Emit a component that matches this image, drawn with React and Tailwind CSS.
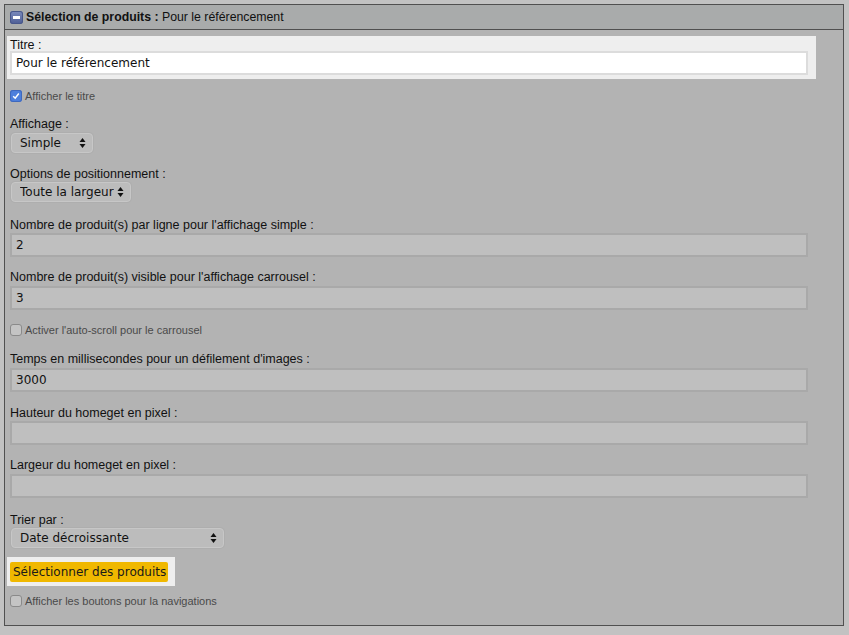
import React, { useState } from "react";

const label = "block h-[14px] text-[12.5px] leading-[16px] text-[#111]";
const textInput =
  "block w-[798px] h-[24px] border-2 border-[#a9a9a9] bg-[#bfbfbf] px-[4px] text-[12px] text-[#111] outline-none";
const inputFont = { fontFamily: '"DejaVu Sans", Verdana, sans-serif' };

function Arrows() {
  return (
    <svg width="7" height="11" viewBox="0 0 7 11" className="pointer-events-none absolute right-[7px] top-1/2 -translate-y-1/2">
      <path d="M3.5 0.5 L6.5 4.5 L0.5 4.5 Z" fill="#111" />
      <path d="M3.5 10.5 L6.5 6.5 L0.5 6.5 Z" fill="#111" />
    </svg>
  );
}

function Select({ value, options, width, className = "" }) {
  return (
    <div className={`relative ${width} ${className}`}>
      <select
        defaultValue={value}
        style={inputFont}
        className="block h-[20px] w-full appearance-none rounded-[4px] border border-[#c7c7c7] bg-[#bcbcbc] pl-[8px] pr-[16px] text-[12px] leading-[18px] text-[#111] shadow-[0_0_0_1px_#aeaeae] outline-none"
      >
        {options.map((o) => (
          <option key={o}>{o}</option>
        ))}
      </select>
      <Arrows />
    </div>
  );
}

function Checkbox({ checked, text, className = "" }) {
  const [on, setOn] = useState(checked);
  return (
    <label
      className={`flex h-[14px] items-center gap-[3px] text-[11px] text-[#4a4a4a] ${className}`}
      onClick={() => setOn(!on)}
    >
      {on ? (
        <span className="flex h-[12px] w-[12px] items-center justify-center rounded-[3px] bg-[#4d7fdc] shadow-[inset_0_0_0_1px_#3f69bd]">
          <svg width="8" height="8" viewBox="0 0 8 8">
            <path d="M1.2 4.2 L3.2 6.2 L6.8 1.5" fill="none" stroke="#fff" strokeWidth="1.5" />
          </svg>
        </span>
      ) : (
        <span className="h-[12px] w-[12px] rounded-[3px] border border-[#8a8a8a] bg-[#c4c4c4]" />
      )}
      <span>{text}</span>
    </label>
  );
}

function Field({ title, value, mt, inputMt = "mt-[3px]" }) {
  return (
    <div className={mt}>
      <span className={label}>{title}</span>
      <input defaultValue={value} style={inputFont} className={`${textInput} ${inputMt}`} />
    </div>
  );
}

export default function App() {
  return (
    <div
      className="min-h-[635px] w-[849px] bg-[#c2c2c2] pl-[4px] pt-[4px]"
      style={{ fontFamily: '"Liberation Sans", Arial, sans-serif' }}
    >
      <div className="w-[840px] border border-[#505050] bg-[#b3b3b3]">
        {/* Header */}
        <div className="flex h-[25px] items-center gap-[3px] border-b border-[#505050] bg-[#a9abab] pl-[5px] text-[12.3px] text-[#111]">
          <span className="flex h-[13px] w-[13px] items-center justify-center rounded-[3px] bg-gradient-to-b from-[#7d8cbd] to-[#4d5d94] shadow-[inset_0_0_0_1px_#48578a]">
            <span className="h-[3px] w-[7px] bg-white" />
          </span>
          <span>
            <b>Sélection de produits :</b> Pour le référencement
          </span>
        </div>

        {/* Body */}
        <div className="pb-[17px] pl-[5px]">
          <div className="-ml-[3px] mt-[6px] w-[809px] bg-[#eeeeee] pb-[4px] pl-[3px] pt-[1px]">
            <span className={label}>Titre :</span>
            <input
              defaultValue="Pour le référencement"
              style={inputFont}
              className="block h-[24px] w-[798px] border-2 border-[#dcdcdc] bg-white px-[4px] text-[12px] text-[#111] outline-none"
            />
          </div>

          <Checkbox checked text="Afficher le titre" className="mt-[10px]" />

          <div className="mt-[13px]">
            <span className={label}>Affichage :</span>
            <Select value="Simple" options={["Simple", "Carrousel"]} width="w-[82px]" className="ml-[1px] mt-[3px]" />
          </div>

          <div className="mt-[13px]">
            <span className={label}>Options de positionnement :</span>
            <Select
              value="Toute la largeur"
              options={["Toute la largeur", "Gauche", "Droite"]}
              width="w-[120px]"
              className="ml-[1px] mt-[2px]"
            />
          </div>

          <Field
            title="Nombre de produit(s) par ligne pour l'affichage simple :"
            value="2"
            mt="mt-[15px]"
            inputMt="mt-[2px]"
          />
          <Field title="Nombre de produit(s) visible pour l'affichage carrousel :" value="3" mt="mt-[12px]" />

          <Checkbox checked={false} text="Activer l'auto-scroll pour le carrousel" className="mt-[13px]" />

          <Field title="Temps en millisecondes pour un défilement d'images :" value="3000" mt="mt-[14px]" />
          <Field title="Hauteur du homeget en pixel :" value="" mt="mt-[13px]" inputMt="mt-[2px]" />
          <Field title="Largeur du homeget en pixel :" value="" mt="mt-[12px]" />

          <div className="mt-[14px]">
            <span className={label}>Trier par :</span>
            <Select
              value="Date décroissante"
              options={["Date décroissante", "Date croissante", "Prix croissant", "Prix décroissant"]}
              width="w-[213px]"
              className="ml-[1px] mt-[2px]"
            />
          </div>

          <div className="-ml-[3px] mt-[9px] w-[168px] bg-[#eeeeee] pb-[4px] pl-[3px] pt-[5px]">
            <button
              style={inputFont}
              className="block h-[20px] w-[158px] rounded-[2px] bg-[#f0b800] pl-[3px] text-left text-[12px] text-[#1a1a1a]"
            >
              Sélectionner des produits
            </button>
          </div>

          <Checkbox checked={false} text="Afficher les boutons pour la navigations" className="mt-[8px]" />
        </div>
      </div>
    </div>
  );
}
